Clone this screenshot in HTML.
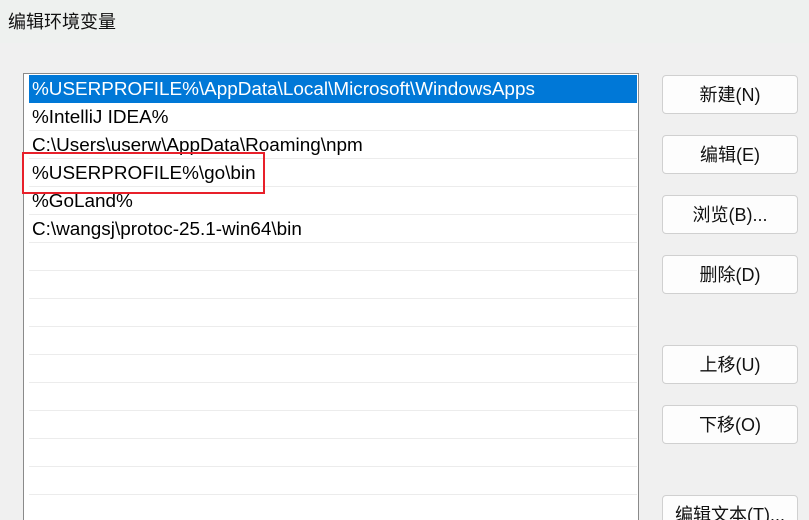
<!DOCTYPE html>
<html><head><meta charset="utf-8"><style>
*{margin:0;padding:0;box-sizing:border-box}
html,body{width:809px;height:520px;overflow:hidden}
body{background:#f0f0f0;font-family:"Liberation Sans","Noto Sans CJK SC",sans-serif;position:relative}
.title{position:absolute;left:0;top:0;width:809px;height:43px;background:#eef1ef;font-size:18px;color:#111;padding:8px 0 0 8px}
.list{position:absolute;left:23px;top:73px;width:616px;height:460px;background:#fff;border:1px solid #8a8a8a}
.row{position:absolute;left:5px;width:608px;height:28px;border-bottom:1px solid #ececec;font-size:18.9px;line-height:30px;padding-left:3px;color:#000;white-space:nowrap;overflow:hidden}
.sel{background:#0078d7;color:#fff;border-bottom:none}
.red{position:absolute;left:22px;top:152px;width:243px;height:42px;border:2px solid #e8202a}
.btn{position:absolute;left:662px;width:136px;height:39px;background:#fdfdfd;border:1px solid #d0d0d0;border-radius:4px;font-size:18px;text-align:center;line-height:39px;color:#111}
</style></head><body>
<div class="title">编辑环境变量</div>
<div class="list">
<div class="row sel" style="top:1px">%USERPROFILE%\AppData\Local\Microsoft\WindowsApps</div>
<div class="row" style="top:29px">%IntelliJ IDEA%</div>
<div class="row" style="top:57px">C:\Users\userw\AppData\Roaming\npm</div>
<div class="row" style="top:85px">%USERPROFILE%\go\bin</div>
<div class="row" style="top:113px">%GoLand%</div>
<div class="row" style="top:141px">C:\wangsj\protoc-25.1-win64\bin</div>
<div class="row" style="top:169px"></div>
<div class="row" style="top:197px"></div>
<div class="row" style="top:225px"></div>
<div class="row" style="top:253px"></div>
<div class="row" style="top:281px"></div>
<div class="row" style="top:309px"></div>
<div class="row" style="top:337px"></div>
<div class="row" style="top:365px"></div>
<div class="row" style="top:393px"></div>
<div class="row" style="top:421px"></div>
</div>
<div class="red"></div>
<div class="btn" style="top:75px">新建(N)</div>
<div class="btn" style="top:135px">编辑(E)</div>
<div class="btn" style="top:195px">浏览(B)...</div>
<div class="btn" style="top:255px">删除(D)</div>
<div class="btn" style="top:345px">上移(U)</div>
<div class="btn" style="top:405px">下移(O)</div>
<div class="btn" style="top:495px">编辑文本(T)...</div>
</body></html>
